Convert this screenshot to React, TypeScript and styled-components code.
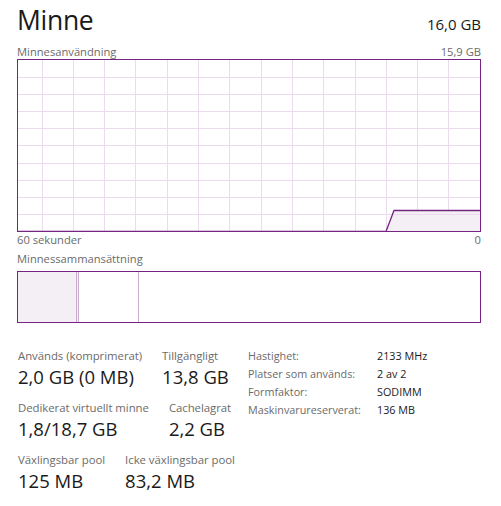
import styled, { createGlobalStyle } from 'styled-components';

const GlobalStyle = createGlobalStyle`
  html, body {
    margin: 0;
    padding: 0;
    background: #ffffff;
  }
  body {
    font-family: "Open Sans", "Noto Sans", "Liberation Sans", sans-serif;
    color: #1a1a1a;
  }
`;

const colors = {
  border: '#742580',
  grid: '#eadcec',
  fill: '#f3eff5',
  divider: '#c9afcd',
  label: '#6b6b6b',
  text: '#1a1a1a',
};

const Page = styled.div`
  width: 501px;
  height: 506px;
  padding: 0 20px 0 17px;
  box-sizing: border-box;
  overflow: hidden;
`;

const Header = styled.div`
  display: flex;
  justify-content: space-between;
  align-items: baseline;
  margin-top: 2px;
  height: 36px;
`;

const Title = styled.div`
  font-size: 26.5px;
  line-height: 36px;
  letter-spacing: -0.3px;
`;

const Total = styled.div`
  font-size: 15px;
  line-height: 20px;
`;

const CaptionRow = styled.div<{ $height: number }>`
  display: flex;
  justify-content: space-between;
  align-items: flex-end;
  height: ${p => p.$height}px;
  font-size: 11.2px;
  line-height: 15px;
  color: ${colors.label};
`;

const Chart = styled.svg`
  display: block;
`;

const CompositionGap = styled.div`
  height: 5px;
`;

const Composition = styled.div`
  display: flex;
  height: 50px;
  border: 1px solid ${colors.border};
`;

const Segment = styled.div<{ $width: number; $fill?: boolean; $double?: boolean }>`
  width: ${p => p.$width}px;
  background: ${p => (p.$fill ? colors.fill : '#fff')};
  border-right: ${p => (p.$double ? `3px double ${colors.divider}` : `1px solid ${colors.divider}`)};
`;

const Stats = styled.div`
  display: flex;
  margin-top: 25px;
  padding-left: 1px;
`;

const LeftStats = styled.div`
  width: 230px;
  display: flex;
  flex-direction: column;
  gap: 11px;
`;

const StatRow = styled.div<{ $gap: number }>`
  display: flex;
  gap: ${p => p.$gap}px;
`;

const Stat = styled.div`
  display: flex;
  flex-direction: column;
`;

const StatLabel = styled.div`
  font-size: 11.4px;
  line-height: 16px;
  letter-spacing: -0.05px;
  color: ${colors.label};
`;

const StatValue = styled.div`
  font-size: 18.5px;
  line-height: 25px;
  color: ${colors.text};
`;

const Specs = styled.div`
  display: grid;
  grid-template-columns: 129px auto;
  grid-auto-rows: 18px;
  align-content: start;
  font-size: 10.8px;
  line-height: 18px;
  margin-top: -1px;
`;

const SpecLabel = styled.div`
  color: ${colors.label};
`;

const SpecValue = styled.div`
  color: ${colors.text};
`;

const W = 464;
const H = 173;

const MemoryChart = () => {
  const verticals = Array.from({ length: 14 }, (_, i) => 24.5 + i * 31.3);
  const horizontals = Array.from({ length: 9 }, (_, i) => 17.5 + i * 17.2);
  const top = 151;
  return (
    <Chart width={W} height={H} viewBox={`0 0 ${W} ${H}`}>
      <rect x={0} y={0} width={W} height={H} fill="#fff" />
      {verticals.map(x => (
        <line key={`v${x}`} x1={Math.round(x) + 0.5} y1={0} x2={Math.round(x) + 0.5} y2={H} stroke={colors.grid} />
      ))}
      {horizontals.map(y => (
        <line key={`h${y}`} x1={0} y1={Math.round(y) + 0.5} x2={W} y2={Math.round(y) + 0.5} stroke={colors.grid} />
      ))}
      <polygon points={`369,${H - 0.5} 377,${top} ${W},${top} ${W},${H - 0.5}`} fill={colors.fill} />
      {horizontals.filter(y => y > top).map(y => (
        <line key={`f${y}`} x1={372} y1={Math.round(y) + 0.5} x2={W} y2={Math.round(y) + 0.5} stroke={colors.grid} />
      ))}
      <polyline points={`0,${H - 0.5} 369,${H - 0.5} 377,${top + 0.5} ${W},${top + 0.5}`} fill="none" stroke={colors.border} strokeWidth={1.3} />
      <rect x={0.5} y={0.5} width={W - 1} height={H - 1} fill="none" stroke={colors.border} />
    </Chart>
  );
};

export default function App() {
  return (
    <>
      <GlobalStyle />
      <Page>
        <Header>
          <Title>Minne</Title>
          <Total>16,0 GB</Total>
        </Header>
        <CaptionRow $height={21}>
          <span>Minnesanvändning</span>
          <span>15,9 GB</span>
        </CaptionRow>
        <MemoryChart />
        <CaptionRow $height={15}>
          <span>60 sekunder</span>
          <span>0</span>
        </CaptionRow>
        <CaptionRow $height={19}>
          <span>Minnessammansättning</span>
        </CaptionRow>
        <CompositionGap />
        <Composition>
          <Segment $width={58} $fill $double />
          <Segment $width={59} />
        </Composition>
        <Stats>
          <LeftStats>
            <StatRow $gap={20}>
              <Stat>
                <StatLabel>Används (komprimerat)</StatLabel>
                <StatValue>2,0 GB (0 MB)</StatValue>
              </Stat>
              <Stat>
                <StatLabel>Tillgängligt</StatLabel>
                <StatValue>13,8 GB</StatValue>
              </Stat>
            </StatRow>
            <StatRow $gap={20}>
              <Stat>
                <StatLabel>Dedikerat virtuellt minne</StatLabel>
                <StatValue>1,8/18,7 GB</StatValue>
              </Stat>
              <Stat>
                <StatLabel>Cachelagrat</StatLabel>
                <StatValue>2,2 GB</StatValue>
              </Stat>
            </StatRow>
            <StatRow $gap={20}>
              <Stat>
                <StatLabel>Växlingsbar pool</StatLabel>
                <StatValue>125 MB</StatValue>
              </Stat>
              <Stat>
                <StatLabel>Icke växlingsbar pool</StatLabel>
                <StatValue>83,2 MB</StatValue>
              </Stat>
            </StatRow>
          </LeftStats>
          <Specs>
            <SpecLabel>Hastighet:</SpecLabel>
            <SpecValue>2133 MHz</SpecValue>
            <SpecLabel>Platser som används:</SpecLabel>
            <SpecValue>2 av 2</SpecValue>
            <SpecLabel>Formfaktor:</SpecLabel>
            <SpecValue>SODIMM</SpecValue>
            <SpecLabel>Maskinvarureserverat:</SpecLabel>
            <SpecValue>136 MB</SpecValue>
          </Specs>
        </Stats>
      </Page>
    </>
  );
}
